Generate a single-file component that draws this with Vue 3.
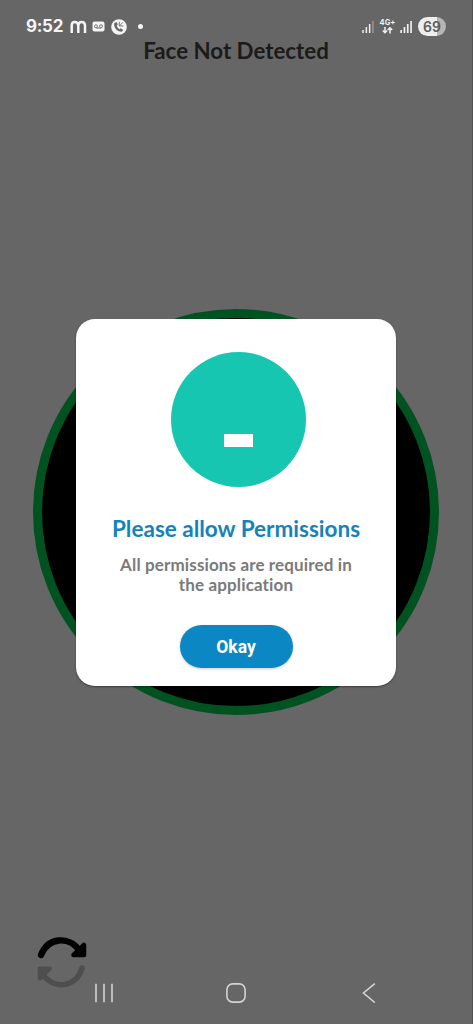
<script setup>
const bars = [3, 6, 9, 12]
</script>

<template>
  <main class="screen">
    <header class="status">
      <div class="left">
        <span class="time">9:52</span>
        <svg class="m" width="17" height="14" viewBox="0 0 17 14"><path d="M1.700 13V5.500Q1.700 2 4.800 2T8.300 5.500V13M8.300 5.500Q8.500 2 11.700 2T15 5.500V13" /></svg>
        <svg class="tape" width="13" height="11" viewBox="0 0 13 11">
          <rect x=".5" y=".5" width="12" height="10" rx="2" fill="#f4f4f4" />
          <g fill="none" stroke="#777" stroke-width="1"><circle cx="4" cy="5.300" r="1.500" /><circle cx="9" cy="5.300" r="1.500" /><path d="M4 7h5" /></g>
        </svg>
        <svg class="call" width="16" height="16" viewBox="0 0 16 16">
          <circle cx="8" cy="8" r="7.800" fill="#f4f4f4" />
          <path d="M3.200 4.200c-.5 4.500 3 8.600 7.600 8.500l1.400-1.700-2.400-1.700-1.400.9C6.900 9.300 6 8.100 5.700 6.600l1.200-1.100-1.400-2.600z" fill="#666" />
          <path d="M8.300 2.800v4.200h4.200M8.500 6.800l3.500-3.500" fill="none" stroke="#777" stroke-width="1" />
        </svg>
        <i class="dot"></i>
      </div>
      <div class="right">
        <svg class="signal" width="13" height="13" viewBox="0 0 13 13"><rect v-for="(h, i) in bars" :key="i" :x="i * 3.3 + .3" :y="13 - h" width="1.500" :height="h" :fill="i === 3 ? '#999' : '#eee'" /></svg>
        <div class="network">
          <span>4G+</span>
          <svg width="11" height="7" viewBox="0 0 11 7"><path d="M3 0v5.500M.8 3.500L3 5.700 5.200 3.500M8 6.500V1M5.800 3L8 .8 10.200 3" /></svg>
        </div>
        <svg class="signal second" width="13" height="13" viewBox="0 0 13 13"><rect v-for="(h, i) in bars" :key="i" :x="i * 3.3 + .3" :y="13 - h" width="1.700" :height="h" fill="#eee" /></svg>
        <span class="battery">69</span>
      </div>
    </header>
    <h1>Face Not Detected</h1>
    <div class="camera"></div>
    <svg class="switch" width="52" height="52" viewBox="0 0 52 52">
      <g fill="none" stroke-linecap="round" stroke-linejoin="round">
        <g stroke="#4e4e4e" fill="#4e4e4e"><path d="M46 31C40 51 19 52 8 39" fill="none" stroke-width="5.500" /><path d="M3.500 31.500H14L4 41.500z" stroke-width="4" /></g>
        <g stroke="#000" fill="#000"><path d="M5 18C12 0 33-1 43 13" fill="none" stroke-width="6.300" /><path d="M48 8V18H37.500z" stroke-width="4.500" /></g>
      </g>
    </svg>
    <nav>
      <svg width="20" height="20" viewBox="0 0 20 20"><path d="M2 .8v18.400M10 .8v18.400M18 .8v18.400" /></svg>
      <svg class="home" width="20" height="20" viewBox="0 0 20 20"><rect x=".9" y=".9" width="18.200" height="18.200" rx="5.800" /></svg>
      <svg width="14" height="20" viewBox="0 0 14 20"><path d="M12.800.6L1.500 10l11.300 9.500" /></svg>
    </nav>
    <section class="dialog">
      <div class="badge"><i></i></div>
      <h2>Please allow Permissions</h2>
      <p>All permissions are required in<br />the application</p>
      <button>Okay</button>
    </section>
  </main>
</template>

<style>
body { margin: 0; background: #666; }
</style>
<style scoped>
* { box-sizing: border-box; }
.screen { position: relative; width: 473px; height: 1024px; overflow: hidden; background: #666; border-right: 1px solid #515151; font-family: Lato, sans-serif; font-variant-ligatures: none; display: flex; flex-direction: column; }
.status { height: 38px; padding: 14px 26px 0 26px; display: flex; justify-content: space-between; flex: none; }
.left, .right { display: flex; align-items: center; height: 25px; }
.time { width: 37px; font: 700 17px/25px Inter, sans-serif; color: #f5f5f5; letter-spacing: -.3px; white-space: nowrap; }
.m { margin-left: 7px; fill: none; stroke: #f5f5f5; stroke-width: 2.500; }
.tape { margin-left: 5px; }
.call { margin-left: 6px; }
.dot { width: 5px; height: 5px; border-radius: 50%; background: #f5f5f5; margin-left: 11px; }
.network { width: 15px; margin-left: 5px; display: flex; flex-direction: column; align-items: center; color: #f0f0f0; }
.network span { font: 700 7.500px/8px Inter, sans-serif; white-space: nowrap; }
.network path { fill: none; stroke: #f0f0f0; stroke-width: 1.500; }
.second { margin-left: 5px; }
.battery { width: 28px; height: 19px; margin-left: 5px; border-radius: 10px; background: linear-gradient(90deg, #eee 68%, #b5b5b5 68%); color: #5c5c5c; text-align: center; font: 600 14px/19px Inter, sans-serif; }
h1 { margin: 0; height: 27px; text-align: center; font-size: 22.300px; line-height: 26px; color: #1b1b1b; font-weight: 700; }
.camera { flex: none; width: 406px; height: 406px; margin: 244px 0 0 33px; border-radius: 50%; border: 9px solid #005320; background: #000; }
.switch { flex: none; margin: 222px 0 0 36px; }
nav { position: absolute; left: 94px; top: 983px; width: 282px; display: flex; justify-content: space-between; }
nav svg { fill: none; stroke: #d3d3d3; stroke-width: 1.600; }
nav .home { margin-right: 5px; }
.dialog { position: absolute; left: 76px; top: 319px; width: 320px; height: 367px; border-radius: 19px; background: #fff; box-shadow: 0 1px 2px #0006; display: flex; flex-direction: column; align-items: center; }
.badge { flex: none; width: 135px; height: 135px; margin: 33px 0 0 5px; border-radius: 50%; background: #17c6b1; display: flex; justify-content: center; padding-top: 82px; }
.badge i { width: 29px; height: 13px; background: #fff; }
h2 { margin: 28px 0 0; font-size: 22.500px; line-height: 27px; font-weight: 700; color: #1583bb; white-space: nowrap; }
p { margin: 13px 0 0; font-size: 17px; letter-spacing: .13px; line-height: 20px; font-weight: 700; text-align: center; color: #7a7a7a; white-space: nowrap; }
button { margin-top: 30px; width: 113px; height: 43px; border: 0; border-radius: 22px; background: #0b87c3; color: #fff; font: 700 17.500px/43px Roboto, sans-serif; padding: 1px 0 0; box-shadow: 0 1px 3px #0003; }
</style>
